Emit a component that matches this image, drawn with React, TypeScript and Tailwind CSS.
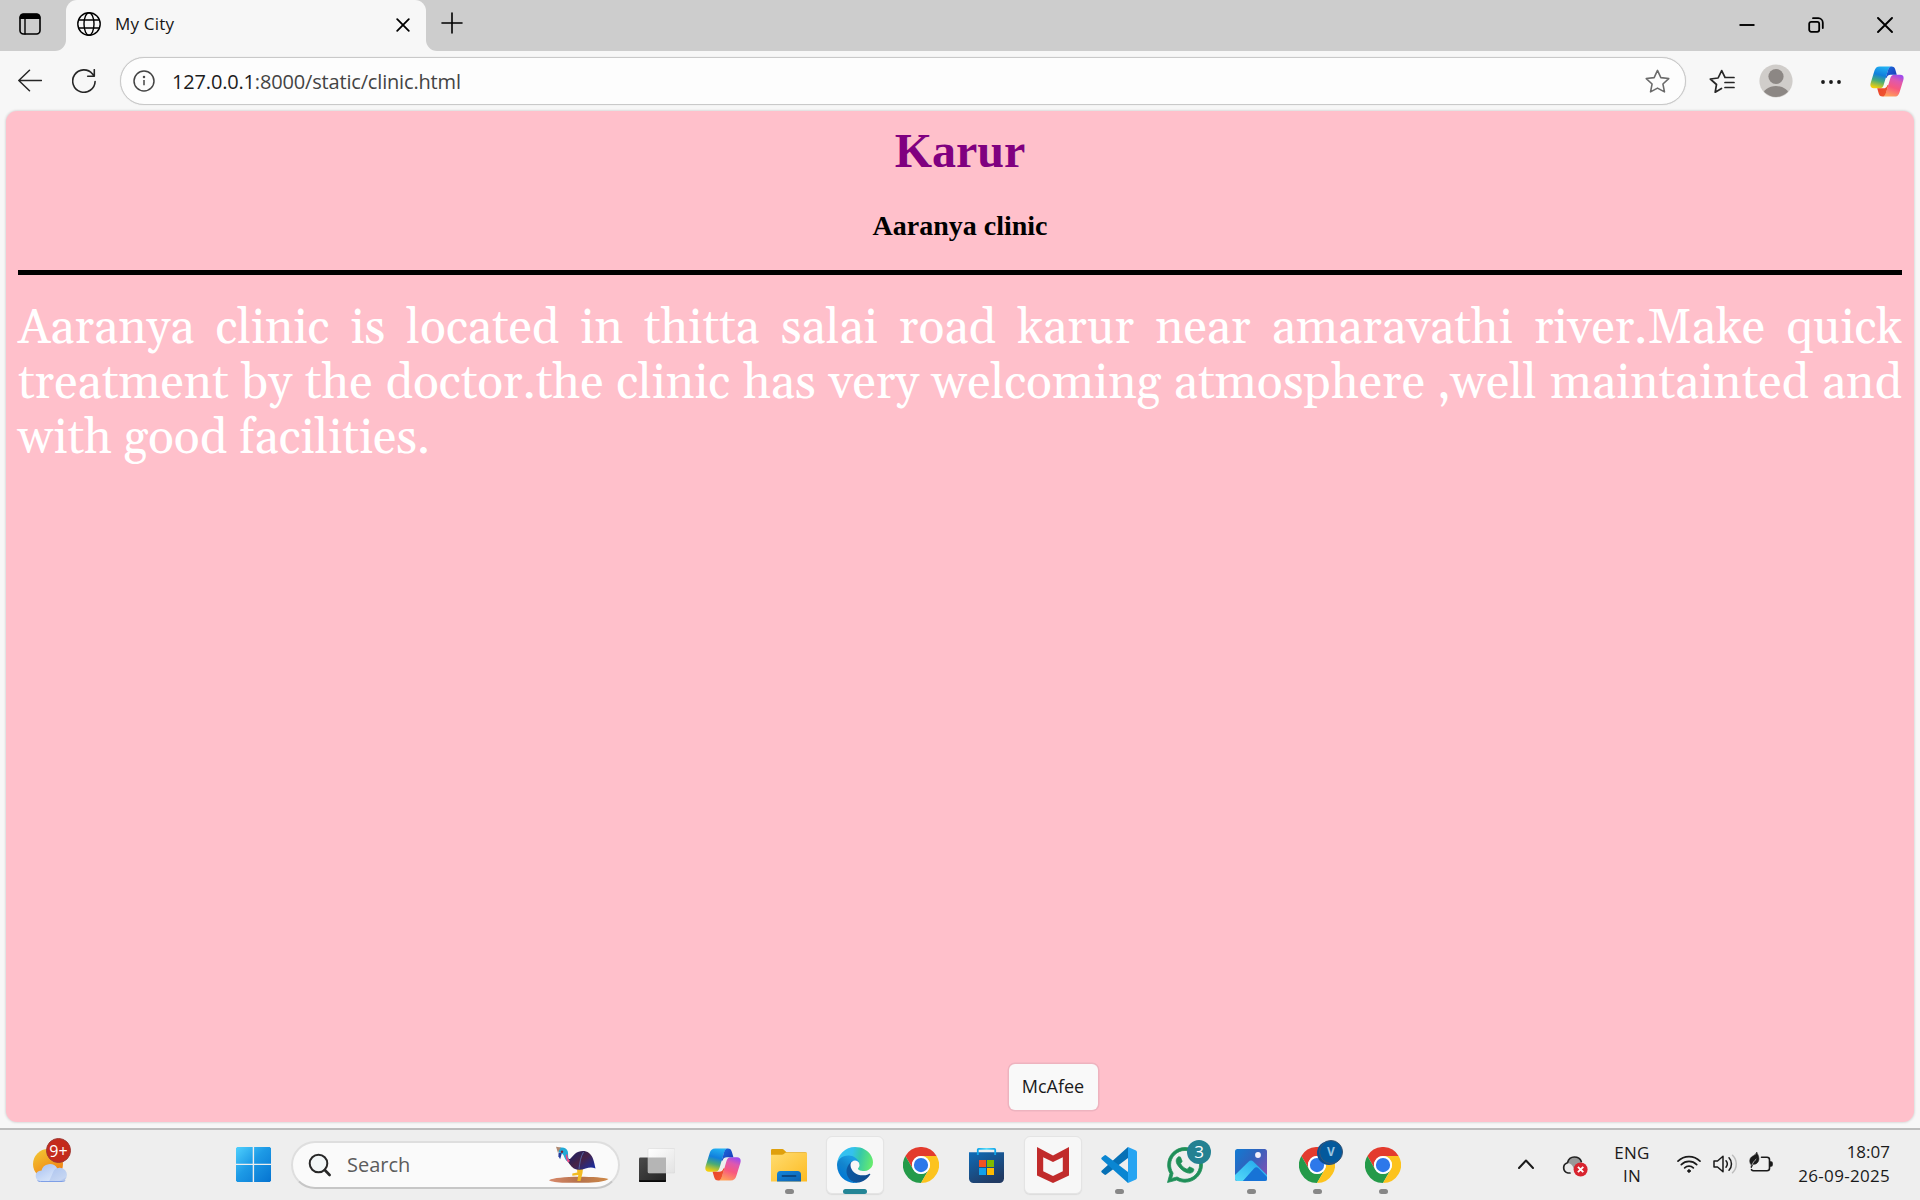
import type { ReactNode } from "react";
import { FaWhatsapp } from "react-icons/fa";

const line = { fill: "none", stroke: "currentColor", strokeLinecap: "round", strokeLinejoin: "round" } as const;

function TabActionsIcon() {
  return (
    <svg className="h-[22px] w-[22px]" viewBox="0 0 22 22">
      <rect x="1" y="1" width="20" height="20" rx="3.5" {...line} strokeWidth="1.6" />
      <path d="M.8 6V4A3.5 3.5 0 0 1 4.3.8h13.4A3.5 3.5 0 0 1 21.2 4v2Z" fill="currentColor" />
      <path d="M6 6v15" {...line} strokeWidth="1.4" />
    </svg>
  );
}

function GlobeIcon() {
  return (
    <svg className="h-6 w-6" viewBox="0 0 24 24" {...line} strokeWidth="1.4">
      <circle cx="12" cy="12" r="11.2" />
      <ellipse cx="12" cy="12" rx="5" ry="11.2" />
      <path d="M1.8 8h20.4M1.8 16h20.4" />
    </svg>
  );
}

function CopilotIcon({ id, className }: { id: string; className: string }) {
  const ribbon = "M10.2.4C7.2.4 5.6 2 4.7 4.9L.8 17.600C-.4 21.400.6 23.700 4 23.700h6.200c2.400 0 3.600-1.400 4.300-3.800L18.200 7.500C19.200 4 20 .4 23.400.4Z";
  const fold = "M22.800.4c2.400 0 3.400 1.100 4.100 3.500l1.500 5.300h-6.600c-2.300 0-3.400 1-4.200 3.300L16.500 13l1.700-5.800C19.200 3.600 20 .4 22.800.4Z";
  return (
    <svg className={className} viewBox="0 0 36 33">
      <defs>
        <linearGradient id={id + "a"} x1=".6" y1="0" x2=".35" y2="1">
          <stop offset="0" stopColor="#22b2f3" />
          <stop offset=".4" stopColor="#117fdc" />
          <stop offset=".68" stopColor="#48ab78" />
          <stop offset="1" stopColor="#f3cf0b" />
        </linearGradient>
        <linearGradient id={id + "b"} x1="0" y1="0" x2="1" y2="1">
          <stop offset="0" stopColor="#1b6fe0" />
          <stop offset="1" stopColor="#1a35b4" />
        </linearGradient>
        <linearGradient id={id + "c"} x1=".65" y1="0" x2=".3" y2="1">
          <stop offset="0" stopColor="#ffa25a" />
          <stop offset=".42" stopColor="#f8587f" />
          <stop offset=".75" stopColor="#dd58b0" />
          <stop offset="1" stopColor="#a04bec" />
        </linearGradient>
        <linearGradient id={id + "d"} x1="0" y1="0" x2="1" y2="1">
          <stop offset="0" stopColor="#f2592f" />
          <stop offset="1" stopColor="#e8402c" />
        </linearGradient>
      </defs>
      <path d={ribbon} fill={`url(#${id}a)`} />
      <path d={ribbon} fill={`url(#${id}c)`} transform="rotate(180 18 16.500)" />
      <path d={fold} fill={`url(#${id}b)`} />
      <path d={fold} fill={`url(#${id}d)`} transform="rotate(180 18 16.500)" />
    </svg>
  );
}

function WeatherIcon() {
  return (
    <svg className="h-[44px] w-[40px]" viewBox="0 0 40 44">
      <defs>
        <linearGradient id="sun" x1=".2" y1="0" x2=".8" y2="1">
          <stop offset="0" stopColor="#f2c532" />
          <stop offset="1" stopColor="#f0760f" />
        </linearGradient>
        <linearGradient id="cloud" x1="0" y1="0" x2="1" y2="1">
          <stop offset="0" stopColor="#a3bdf0" />
          <stop offset=".5" stopColor="#c9daf7" />
          <stop offset=".85" stopColor="#dfeafb" />
          <stop offset="1" stopColor="#8eabe8" />
        </linearGradient>
      </defs>
      <circle cx="15" cy="26" r="15" fill="url(#sun)" />
      <path d="M7.500 43.500a5.500 5.500 0 0 1-.6-10.800c.5 0 1 0 1.500.1a8.700 8.700 0 0 1 15.800-2.600 6.900 6.900 0 0 1 5 13.300Z" fill="url(#cloud)" />
      <path d="M20 34.500c.8-2.600 2.300-4 4.500-4.400a6.900 6.900 0 0 1 4.700 13.400H16" fill="#7d9ddd" opacity=".25" />
      <path d="M4.500 42.600c1 .7 2 .9 3 .9h21.700c1.200 0 2.200-.4 3-.9" fill="none" stroke="#7e9fe6" strokeWidth="1" />
    </svg>
  );
}

function StartIcon() {
  return (
    <svg className="h-[35px] w-[35px]" viewBox="0 0 35 35">
      <defs>
        <linearGradient id="win" gradientUnits="userSpaceOnUse" x1="0" y1="0" x2="35" y2="35">
          <stop offset="0" stopColor="#4fd0fd" />
          <stop offset=".45" stopColor="#1d9ae6" />
          <stop offset="1" stopColor="#0573d0" />
        </linearGradient>
      </defs>
      <path d="M1.200 0H16.700V16.700H0V1.200ZM18.100 0H33.800L35 1.200V16.700H18.100ZM0 18.100H16.700V35H1.200L0 33.800ZM18.100 18.100H35V33.800L33.800 35H18.100Z" fill="url(#win)" />
    </svg>
  );
}

function CassowaryIcon() {
  return (
    <svg className="h-[37px] w-[60px]" viewBox="0 0 60 37">
      <defs>
        <linearGradient id="body" x1="0" y1="0" x2="1" y2=".8">
          <stop offset="0" stopColor="#8a2a4c" />
          <stop offset=".3" stopColor="#2c2159" />
          <stop offset=".55" stopColor="#472346" />
          <stop offset="1" stopColor="#1b2c9c" />
        </linearGradient>
        <linearGradient id="sand" x1="0" y1="0" x2="1" y2="0">
          <stop offset="0" stopColor="#d98a6c" />
          <stop offset=".5" stopColor="#b5714b" />
          <stop offset="1" stopColor="#cf8a48" />
        </linearGradient>
      </defs>
      <path d="M0 34.200c4-2.200 16-3.400 30-3.400s25 .8 29.500 2.200c-3 2-10 3.400-20 3.800H16C8 36.500 2 35.600 0 34.200Z" fill="url(#sand)" />
      <path d="M28 23l6-1-.5 5-2 8h-3.200l1-6-6 .8v-2.200l5-1Z" fill="#f2bb22" />
      <path d="M17 10c1 2 2.500 3.500 4 3L26 7.800C30 4.500 36 4 40 7c4.500 3.500 5 9 6.500 15.500-3.500-1.500-6.500-1-10 0-6 2.500-12.500 1.500-16-4.500C18.500 15.500 17 13 17 10Z" fill="url(#body)" />
      <path d="M34.500 6c-3 5-3.500 10-4.500 17" fill="none" stroke="#54639d" strokeWidth="1" />
      <path d="M10 2c4-1.200 7.800 0 8.800 3.500.7 3-.3 5 1.200 8l-2.500 1.500c-2.500-3-2.200-5.500-4-7L9.500 6Z" fill="#22a9d6" />
      <path d="M18.300 8c0 3 .8 5 2.700 7l-1.800 1.500c-2-2.500-2.600-4.500-2.400-7.500Z" fill="#e24b87" />
      <path d="M7 .8 12 1.400 10 4.500 9 7Z" fill="#b08a72" />
      <path d="M9.600 6.500l3.200.8-1.600 6-1.800-3Z" fill="#253a9a" />
      <circle cx="13" cy="5.800" r="1.200" fill="#7c2135" />
    </svg>
  );
}

function TaskViewIcon() {
  return (
    <svg className="h-9 w-9" viewBox="0 0 36 36">
      <defs>
        <linearGradient id="dark" x1="0" y1="0" x2="1" y2="1">
          <stop offset="0" stopColor="#4a4a4a" />
          <stop offset="1" stopColor="#232323" />
        </linearGradient>
        <linearGradient id="glass" x1="0" y1="0" x2="1" y2="1">
          <stop offset="0" stopColor="#ffffff" />
          <stop offset="1" stopColor="#e2e2e2" />
        </linearGradient>
      </defs>
      <rect x="0" y="10.500" width="27" height="24.500" rx="1.200" fill="url(#dark)" />
      <path d="M0 33.300h27v.6a1.100 1.100 0 0 1-1.100 1.100H1.100A1.100 1.100 0 0 1 0 33.900Z" fill="#080808" />
      <rect x="9" y="1.500" width="27" height="24.500" rx="1.200" fill="url(#glass)" stroke="#d5d5d5" strokeWidth=".5" />
      <path d="M9 10.500H27V26H10a1 1 0 0 1-1-1Z" fill="#b5b5b5" />
    </svg>
  );
}

function FolderIcon() {
  return (
    <svg className="h-9 w-9" viewBox="0 0 36 36">
      <defs>
        <linearGradient id="fold" x1="0" y1="0" x2="1" y2="1">
          <stop offset="0" stopColor="#ffdc70" />
          <stop offset="1" stopColor="#fdbb22" />
        </linearGradient>
        <linearGradient id="grip" x1="0" y1="0" x2="1" y2="1">
          <stop offset="0" stopColor="#1285dc" />
          <stop offset="1" stopColor="#0d62b0" />
        </linearGradient>
      </defs>
      <path d="M0 8V3.300A1.300 1.300 0 0 1 1.300 2h9.500c1 0 1.600.3 2.300 1l2.400 2.200H34.500A1.500 1.500 0 0 1 36 6.700V10H0Z" fill="#dfa00d" />
      <path d="M0 7.700h10.800c1 0 1.600-.3 2.300-.9l1.200-1H36V34.500H0Z" fill="url(#fold)" />
      <path d="M6 34.500V27.500a3.500 3.500 0 0 1 3.500-3.500h17a3.500 3.500 0 0 1 3.500 3.500v7Z" fill="url(#grip)" />
      <path d="M11.500 29h13" stroke="#0a4884" strokeWidth="1.800" strokeLinecap="round" />
    </svg>
  );
}

function EdgeIcon() {
  return (
    <svg className="h-9 w-9" viewBox="0 0 256 256">
      <defs>
        <linearGradient id="e1" gradientUnits="userSpaceOnUse" x1="63" y1="178" x2="241" y2="178">
          <stop offset="0" stopColor="#0c59a4" />
          <stop offset="1" stopColor="#114a8b" />
        </linearGradient>
        <linearGradient id="e2" gradientUnits="userSpaceOnUse" x1="130" y1="100" x2="40" y2="225">
          <stop offset="0" stopColor="#1b9de2" />
          <stop offset=".45" stopColor="#1384cd" />
          <stop offset="1" stopColor="#0078d4" />
        </linearGradient>
        <linearGradient id="e3" gradientUnits="userSpaceOnUse" x1="20" y1="60" x2="250" y2="110">
          <stop offset="0" stopColor="#35c1f1" />
          <stop offset=".35" stopColor="#34c1ed" />
          <stop offset=".6" stopColor="#36c9a8" />
          <stop offset="1" stopColor="#66eb6e" />
        </linearGradient>
      </defs>
      <path d="M231.100 190.500c-3.400 1.800-6.900 3.400-10.500 4.700a101.700 101.700 0 0 1-35.900 6.500c-47.300 0-88.500-32.500-88.500-74.300.1-11.400 6.400-21.900 16.400-27.300-42.800 1.800-53.800 46.400-53.800 72.500 0 73.900 68.100 81.400 82.800 81.400 7.900 0 19.800-2.300 27-4.600l1.300-.4a128.300 128.300 0 0 0 66.600-52.800 4 4 0 0 0-5.400-5.700Z" fill="url(#e1)" />
      <path d="M105.700 241.400a79.200 79.200 0 0 1-22.700-21.300 80.700 80.700 0 0 1 29.500-120c3.200-1.500 8.500-4.100 15.600-4a32.400 32.400 0 0 1 25.700 13 31.900 31.900 0 0 1 6.300 18.700c0-.2 24.500-79.600-80-79.600-43.900 0-80 41.700-80 78.200a130.200 130.200 0 0 0 12.100 56 128 128 0 0 0 156.400 67.100 75.600 75.600 0 0 1-62.800-8Z" fill="url(#e2)" />
      <path d="M152.300 148.900c-.9 1-3.400 2.500-3.400 5.600 0 2.600 1.700 5.200 4.800 7.300 14.300 10 41.400 8.600 41.500 8.600a59.600 59.600 0 0 0 30.300-8.300 61.400 61.400 0 0 0 30.400-52.900c.3-22.400-8-37.300-11.300-43.900C223.500 23.900 177.700 0 128 0A128 128 0 0 0 0 126.200c.5-36.500 36.800-66 80-66 3.500 0 23.500.3 42 10.100 16.300 8.600 24.900 18.900 30.800 29.200 6.200 10.700 7.300 24.100 7.300 29.500 0 5.300-2.700 13.300-7.800 19.900Z" fill="url(#e3)" />
    </svg>
  );
}

function ChromeIcon() {
  return (
    <svg className="h-9 w-9" viewBox="0 0 48 48">
      <path d="M24 12H44.800A24 24 0 0 0 3.200 12L13.600 30A12 12 0 0 1 24 12Z" fill="#e33b2e" />
      <path d="M3.200 12 13.600 30A12 12 0 0 0 34.400 30L24 48A24 24 0 0 1 3.200 12Z" fill="#249a49" />
      <path d="M24 48 34.400 30A12 12 0 0 0 24 12H44.800A24 24 0 0 1 24 48Z" fill="#fcc31e" />
      <circle cx="24" cy="24" r="12" fill="#fff" />
      <circle cx="24" cy="24" r="9.500" fill="#2d78ea" />
    </svg>
  );
}

function StoreIcon() {
  return (
    <svg className="h-9 w-9" viewBox="0 0 36 36">
      <defs>
        <linearGradient id="bag" x1="0" y1="0" x2=".6" y2="1">
          <stop offset="0" stopColor="#0f6cb8" />
          <stop offset="1" stopColor="#213a63" />
        </linearGradient>
        <linearGradient id="handle" x1="0" y1="0" x2="1" y2="0">
          <stop offset="0" stopColor="#0fa5ea" />
          <stop offset=".5" stopColor="#5adcf8" />
          <stop offset="1" stopColor="#0fa5ea" />
        </linearGradient>
      </defs>
      <path d="M0 5.200H35V31.500A4.500 4.500 0 0 1 30.500 36H4.500A4.500 4.500 0 0 1 0 31.500Z" fill="url(#bag)" />
      <path d="M8.800 8V2.800A.9.900 0 0 1 9.700 1.900h15.600a.9.900 0 0 1 .9.900V8" fill="none" stroke="url(#handle)" strokeWidth="1.800" />
      <path d="M10 13h7v7h-7Z" fill="#f25022" />
      <path d="M18 13h7v7h-7Z" fill="#7fba00" />
      <path d="M10 21h7v7h-7Z" fill="#12a0ea" />
      <path d="M18 21h7v7h-7Z" fill="#ffb900" />
    </svg>
  );
}

function McAfeeIcon() {
  return (
    <svg className="h-9 w-8" viewBox="0 0 32 36">
      <path d="M0 0 16 8.500 32 0V28.500L16 36 0 28.500ZM6.200 10.300V24.300L16 29 25.800 24.300V10.300L16 15Z" fill="#c12b2b" fillRule="evenodd" />
    </svg>
  );
}

function CodeIcon() {
  return (
    <svg className="h-9 w-9" viewBox="0 0 36 36">
      <path d="M27 0 .8 23.600a1.200 1.200 0 0 0 0 1.800l2.500 2.100a1.500 1.500 0 0 0 1.900.1L27 11Z" fill="#0670b5" />
      <path d="M27 36 .8 12.400a1.200 1.200 0 0 1 0-1.800l2.500-2.100a1.500 1.500 0 0 1 1.900-.1L27 25Z" fill="#0a86d2" />
      <path d="M27 0 35 3.600A2 2 0 0 1 36 5.400V30.600A2 2 0 0 1 35 32.400L27 36Z" fill="#26a4f2" />
    </svg>
  );
}

function PhotosIcon() {
  return (
    <svg className="h-8 w-8" viewBox="0 0 32 32">
      <defs>
        <linearGradient id="sky" x1="0" y1="0" x2="1" y2=".7">
          <stop offset="0" stopColor="#127bd3" />
          <stop offset=".5" stopColor="#2f63bd" />
          <stop offset="1" stopColor="#7a52b5" />
        </linearGradient>
        <linearGradient id="hill" x1="0" y1="1" x2="1" y2="0">
          <stop offset="0" stopColor="#5ae0fb" />
          <stop offset="1" stopColor="#1a9fea" />
        </linearGradient>
        <clipPath id="frame"><rect width="32" height="32" rx="2.500" /></clipPath>
      </defs>
      <g clipPath="url(#frame)">
        <rect width="32" height="32" fill="url(#sky)" />
        <path d="M-2 28 13.500 12.800a3.600 3.600 0 0 1 5 0L36 30v4H-2Z" fill="url(#hill)" />
        <path d="M7 33 19 19.500a3.300 3.300 0 0 1 4.800 0L35 31v3H7Z" fill="#1773d6" />
        <circle cx="23" cy="6" r="2.900" fill="#f4f0fa" />
      </g>
    </svg>
  );
}

function AppSlot({ children, mark = "none", raised = false }: { children: ReactNode; mark?: "none" | "dot" | "bar"; raised?: boolean }) {
  return (
    <div className="flex w-[66px] justify-center">
      <div className={raised
        ? "relative flex h-[58px] w-[58px] items-center justify-center rounded-md border border-[#e4e4e4] bg-[#f7f7f7] shadow-[0_1px_1px_#dcdcdc]"
        : "relative flex h-[58px] w-[58px] items-center justify-center"}>
        {children}
        {mark === "dot" && <span className="absolute top-[53px] h-[5px] w-[9px] rounded-full bg-[#878787]" />}
        {mark === "bar" && <span className="absolute top-[52px] h-[5px] w-6 rounded-full bg-[#248596]" />}
      </div>
    </div>
  );
}

function TabStrip() {
  return (
    <div className="flex h-[51px] bg-[#cdcdcd] text-black">
      <div className="flex w-[66px] items-center pl-[19px] pb-[3px] pr-1">
        <TabActionsIcon />
      </div>
      <div className="relative flex w-[360px] items-center rounded-t-[11px] bg-[#f7f7f7] pb-[3px] pl-[11px] pr-[16px]">
        <svg className="absolute bottom-0 -left-[11px] h-[11px] w-[11px]" viewBox="0 0 11 11"><path d="M11 0v11H0A11 11 0 0 0 11 0Z" fill="#f7f7f7" /></svg>
        <svg className="absolute bottom-0 -right-[11px] h-[11px] w-[11px]" viewBox="0 0 11 11"><path d="M0 0v11H11A11 11 0 0 1 0 0Z" fill="#f7f7f7" /></svg>
        <GlobeIcon />
        <span className="ml-[14px] flex-1 text-[17px] tracking-[0.2px] text-[#161616]">My City</span>
        <svg className="mt-[2px] h-[14px] w-[14px]" viewBox="0 0 14 14" {...line} strokeWidth="1.800"><path d="m1.200 1.200 11.600 11.600M12.800 1.200 1.200 12.800" /></svg>
      </div>
      <svg className="ml-[15px] mt-[12px] h-[22px] w-[22px]" viewBox="0 0 22 22" {...line} strokeWidth="1.600"><path d="M11 1v20M1 11h20" /></svg>
      <div className="ml-auto flex items-center gap-[53px] pb-[1px] pr-[27px]">
        <svg className="h-4 w-4" viewBox="0 0 16 16" {...line} strokeWidth="1.900" strokeLinecap="butt"><path d="M.5 8h15" /></svg>
        <svg className="h-4 w-4" viewBox="0 0 16 16" {...line} strokeWidth="1.800">
          <rect x="1.200" y="4.800" width="10" height="10" rx="2" />
          <path d="M5 1.200h5.300a4.500 4.500 0 0 1 4.500 4.500V11" />
        </svg>
        <svg className="h-4 w-4" viewBox="0 0 16 16" {...line} strokeWidth="1.900"><path d="m1 1 14 14M15 1 1 15" /></svg>
      </div>
    </div>
  );
}

function AddressBar() {
  return (
    <div className="flex h-[60px] items-center bg-[#f7f7f7] text-[#262626]">
      <svg className="ml-[18px] h-6 w-6" viewBox="0 0 24 24" {...line} strokeWidth="1.500"><path d="M23.500 11.500H.8M11.500 1.300.8 11.500l10.700 10.200" /></svg>
      <svg className="ml-[30px] h-6 w-6" viewBox="0 0 24 24" {...line} strokeWidth="1.600"><path d="M23.100 12.500A11.200 11.200 0 1 1 20.500 4.900L22 6.700M22.300 .7V7.300H15.700" /></svg>
      <div className="ml-[24px] flex h-12 w-[1566px] items-center rounded-full border border-[#c9c9c9] bg-[#fdfdfd] pl-[12px] pr-[15px] shadow-[0_0_1px_#c9c9c9]">
        <svg className="h-[22px] w-[22px] text-[#444]" viewBox="0 0 22 22" {...line} strokeWidth="1.500">
          <circle cx="11" cy="11" r="10" />
          <path d="M11 10v5.200" strokeLinecap="butt" />
          <circle cx="11" cy="7" r=".5" fill="currentColor" />
        </svg>
        <div className="ml-[17px] flex-1 pt-[1px] text-[20px] tracking-[-0.17px] text-[#444]">
          <span className="text-[#1c1c1c]">127.0.0.1</span>:8000/static/clinic.html
        </div>
        <svg className="h-[25px] w-[25px] text-[#6b6b6b]" viewBox="0 0 24 24" {...line} strokeWidth="1.500"><path d="m12 1.300 3.200 7 7.600.9-5.600 5.200 1.500 7.600L12 18.300 5.300 22l1.500-7.600L1.200 9.200l7.600-.9Z" /></svg>
      </div>
      <svg className="ml-[23px] h-[25px] w-[26px]" viewBox="0 0 26 25" {...line} strokeWidth="1.700">
        <path d="M12.500 19.500 6.200 23.200 7.500 15.500 1.300 10l7.800-1L12.700 1.600 16 8.300M16 8.500h9M16 13.500h9M16 18.500h9" />
      </svg>
      <svg className="ml-[24px] h-[34px] w-[34px]" viewBox="0 0 34 34">
        <defs><clipPath id="avatar"><circle cx="17" cy="17" r="16" /></clipPath></defs>
        <circle cx="17" cy="17" r="16.600" fill="#d0cdca" />
        <circle cx="17" cy="12.500" r="7.600" fill="#8c8784" />
        <ellipse cx="17" cy="32" rx="13.500" ry="10" fill="#8c8784" clipPath="url(#avatar)" />
      </svg>
      <svg className="ml-[28px] mt-[1px] h-5 w-5" viewBox="0 0 20 20" fill="#1a1a1a"><circle cx="2" cy="10" r="1.900" /><circle cx="10" cy="10" r="1.900" /><circle cx="18" cy="10" r="1.900" /></svg>
      <CopilotIcon id="ca" className="ml-[29px] h-[31px] w-[34px]" />
    </div>
  );
}

function Tray() {
  return (
    <div className="ml-auto flex h-full items-center pr-[30px] text-[17px] text-[#1a1a1a]">
      <svg className="mb-[1px] h-[10px] w-4" viewBox="0 0 16 10" {...line} strokeWidth="2"><path d="M1 9 8 1.500 15 9" /></svg>
      <svg className="ml-[28px] mt-[2px] h-[22px] w-[26px]" viewBox="0 0 26 22">
        <path d="M8 18H6A5.300 5.300 0 0 1 5.500 7.700C6.500 4 9 2 12.300 2c3.500 0 6 1.600 7 4.500l2 5.500L12 18Z" fill="#e9e9e9" />
        <path d="M5.500 7.700C6.500 4 9 2 12.300 2c3.500 0 6 1.600 7 4.500l2 4.500-8.800 5c-.7-4.500-3-7.500-7-8.300Z" fill="#989898" />
        <path d="M8 18H6A5.300 5.300 0 0 1 5.500 7.700C6.500 4 9 2 12.300 2c3.500 0 6 1.600 7 4.500" fill="none" stroke="#222" strokeWidth="1.700" strokeLinecap="round" />
        <circle cx="18.600" cy="14.500" r="7" fill="#d8242f" />
        <path d="m15.900 11.800 5.400 5.400m0-5.400-5.400 5.400" stroke="#fff" strokeWidth="1.900" />
      </svg>
      <div className="ml-[24px] w-[40px] pb-[1px] text-center leading-[23px] tracking-[0.3px]">
        <div>ENG</div>
        <div>IN</div>
      </div>
      <svg className="ml-[25px] mb-[1px] h-[18px] w-6" viewBox="0 0 24 18" {...line} strokeWidth="1.700">
        <path d="M1 6.200a15.500 15.500 0 0 1 22 0M4.300 9.600a11 11 0 0 1 15.400 0M7.700 12.900a6.200 6.200 0 0 1 8.600 0" />
        <circle cx="12" cy="16" r="1.300" fill="currentColor" strokeWidth="1" />
      </svg>
      <svg className="ml-[12px] mb-[1px] h-5 w-6" viewBox="0 0 24 20" {...line} strokeWidth="1.500">
        <path d="M1 7v6h3.500L10 17.800V2.200L4.500 7Z" />
        <path d="M13 6.800c1.500 1.800 1.500 4.600 0 6.400M16 3.800c3.300 3.400 3.300 9 0 12.400" />
        <path d="M19.500 1.200c5 4.800 5 12.800 0 17.600" stroke="#bcbcbc" />
      </svg>
      <svg className="ml-[12px] mb-[5px] h-5 w-6" viewBox="0 0 24 20" {...line} strokeWidth="1.600">
        <path d="M12.500 5.200H18a2.500 2.500 0 0 1 2.500 2.500v8.500A2.500 2.500 0 0 1 18 18.700H4.500a2.500 2.500 0 0 1-2-1" />
        <path d="M21 10h1a1 1 0 0 1 1 1v2a1 1 0 0 1-1 1h-1Z" fill="currentColor" />
        <path d="M7.800.4C8.300 2 9.800 3.500 9.900 6.500c.1 3.600-2.400 6-5.700 5.800L2.200 16c-.3-.6-.3-1.600.2-2.900C.8 11.500.2 8.500 1.400 6.300 2.800 3.700 6.500 3.600 7.800.4Z" fill="currentColor" strokeWidth=".6" />
        <path d="M3 13c1-2.500 2.300-4.300 4-5.700" stroke="#eee" strokeWidth=".7" />
      </svg>
      <div className="ml-[24px] w-[93px] pb-[2px] text-right leading-6 tracking-[0.3px]">
        <div className="tracking-normal">18:07</div>
        <div>26-09-2025</div>
      </div>
    </div>
  );
}

function Taskbar() {
  return (
    <div className="flex h-[72px] items-center border-t-2 border-[#bdbdbd] bg-[#eeeeee] pb-[1px]">
      <div className="relative flex h-full w-[236px] items-start pl-[33px] pt-[8px]">
        <WeatherIcon />
        <span className="absolute left-[46px] top-[8px] flex h-[25px] w-[25px] items-center justify-center rounded-full border border-[#9e3a35] bg-[#c42b1c] text-[16px] leading-none text-white">9+</span>
      </div>
      <StartIcon />
      <div className="ml-[20px] mr-[4px] flex h-[48px] w-[329px] items-center rounded-full border-2 border-[#dedede] border-b-[#c6c6c6] bg-[#fafafa] pl-[15px] pr-[9px]">
        <svg className="h-6 w-6" viewBox="0 0 24 24" fill="none" stroke="#272727" strokeLinecap="round">
          <circle cx="10.500" cy="10.500" r="8.800" fill="#f2f6f7" strokeWidth="2" />
          <path d="m16.800 17 4.800 5" strokeWidth="2.600" />
        </svg>
        <span className="ml-[15px] flex-1 text-[20px] text-[#5c5c5c]">Search</span>
        <CassowaryIcon />
      </div>
      <AppSlot><TaskViewIcon /></AppSlot>
      <AppSlot><CopilotIcon id="cb" className="h-[33px] w-9" /></AppSlot>
      <AppSlot mark="dot"><FolderIcon /></AppSlot>
      <AppSlot mark="bar" raised><EdgeIcon /></AppSlot>
      <AppSlot><ChromeIcon /></AppSlot>
      <AppSlot><StoreIcon /></AppSlot>
      <AppSlot raised>
        <McAfeeIcon />
        <div className="absolute bottom-[83px] flex h-[46px] w-[89px] items-center justify-center rounded-[6px] bg-[#f9f9f9] pb-[1px] text-[18px] text-[#1b1b1b] shadow-[0_0_0_1.5px_#eeb3bf]">McAfee</div>
      </AppSlot>
      <AppSlot mark="dot"><CodeIcon /></AppSlot>
      <AppSlot>
        <FaWhatsapp className="h-[40px] w-[40px] stroke-current stroke-[10] text-[#1f8f58]" />
        <span className="absolute left-[31px] top-[4px] flex h-6 w-6 items-center justify-center rounded-full bg-[#248192] text-[17px] leading-none text-white">3</span>
      </AppSlot>
      <AppSlot mark="dot"><PhotosIcon /></AppSlot>
      <AppSlot mark="dot">
        <ChromeIcon />
        <span className="absolute left-[31px] top-[4px] flex h-6 w-6 items-center justify-center rounded-full border border-[#3b5573] bg-[#04599c] text-[12px] font-bold leading-none text-[#9cc6e2] shadow-[-2px_1px_0_#0c4f92]">V</span>
      </AppSlot>
      <AppSlot mark="dot"><ChromeIcon /></AppSlot>
      <Tray />
    </div>
  );
}

export default function App() {
  return (
    <div className="flex h-[1200px] w-[1920px] flex-col overflow-hidden bg-[#f7f7f7] font-['Open_Sans',sans-serif]">
      <TabStrip />
      <AddressBar />
      <main className="mx-[6px] mb-[6px] flex-1 rounded-[11px] bg-[#ffc0cb] px-3 shadow-[0_0_2px_1px_#dcdcdc]">
        <h1 className="pt-[12px] text-center font-['Liberation_Serif',serif] text-[48px] font-bold leading-[55px] text-[#800080]">Karur</h1>
        <h3 className="mt-[32px] text-center font-['Liberation_Serif',serif] text-[28px] font-bold leading-8 text-black">Aaranya clinic</h3>
        <hr className="mt-[28px] h-[5px] border-0 bg-black" />
        <p className="mt-[26px] text-justify font-['Gelasio',Georgia,serif] text-[48px] leading-[55px] text-white">
          Aaranya clinic is located in thitta salai road karur near amaravathi river.Make quick treatment by the doctor.the clinic has very welcoming atmosphere ,well maintainted and with good facilities.
        </p>
      </main>
      <Taskbar />
    </div>
  );
}
